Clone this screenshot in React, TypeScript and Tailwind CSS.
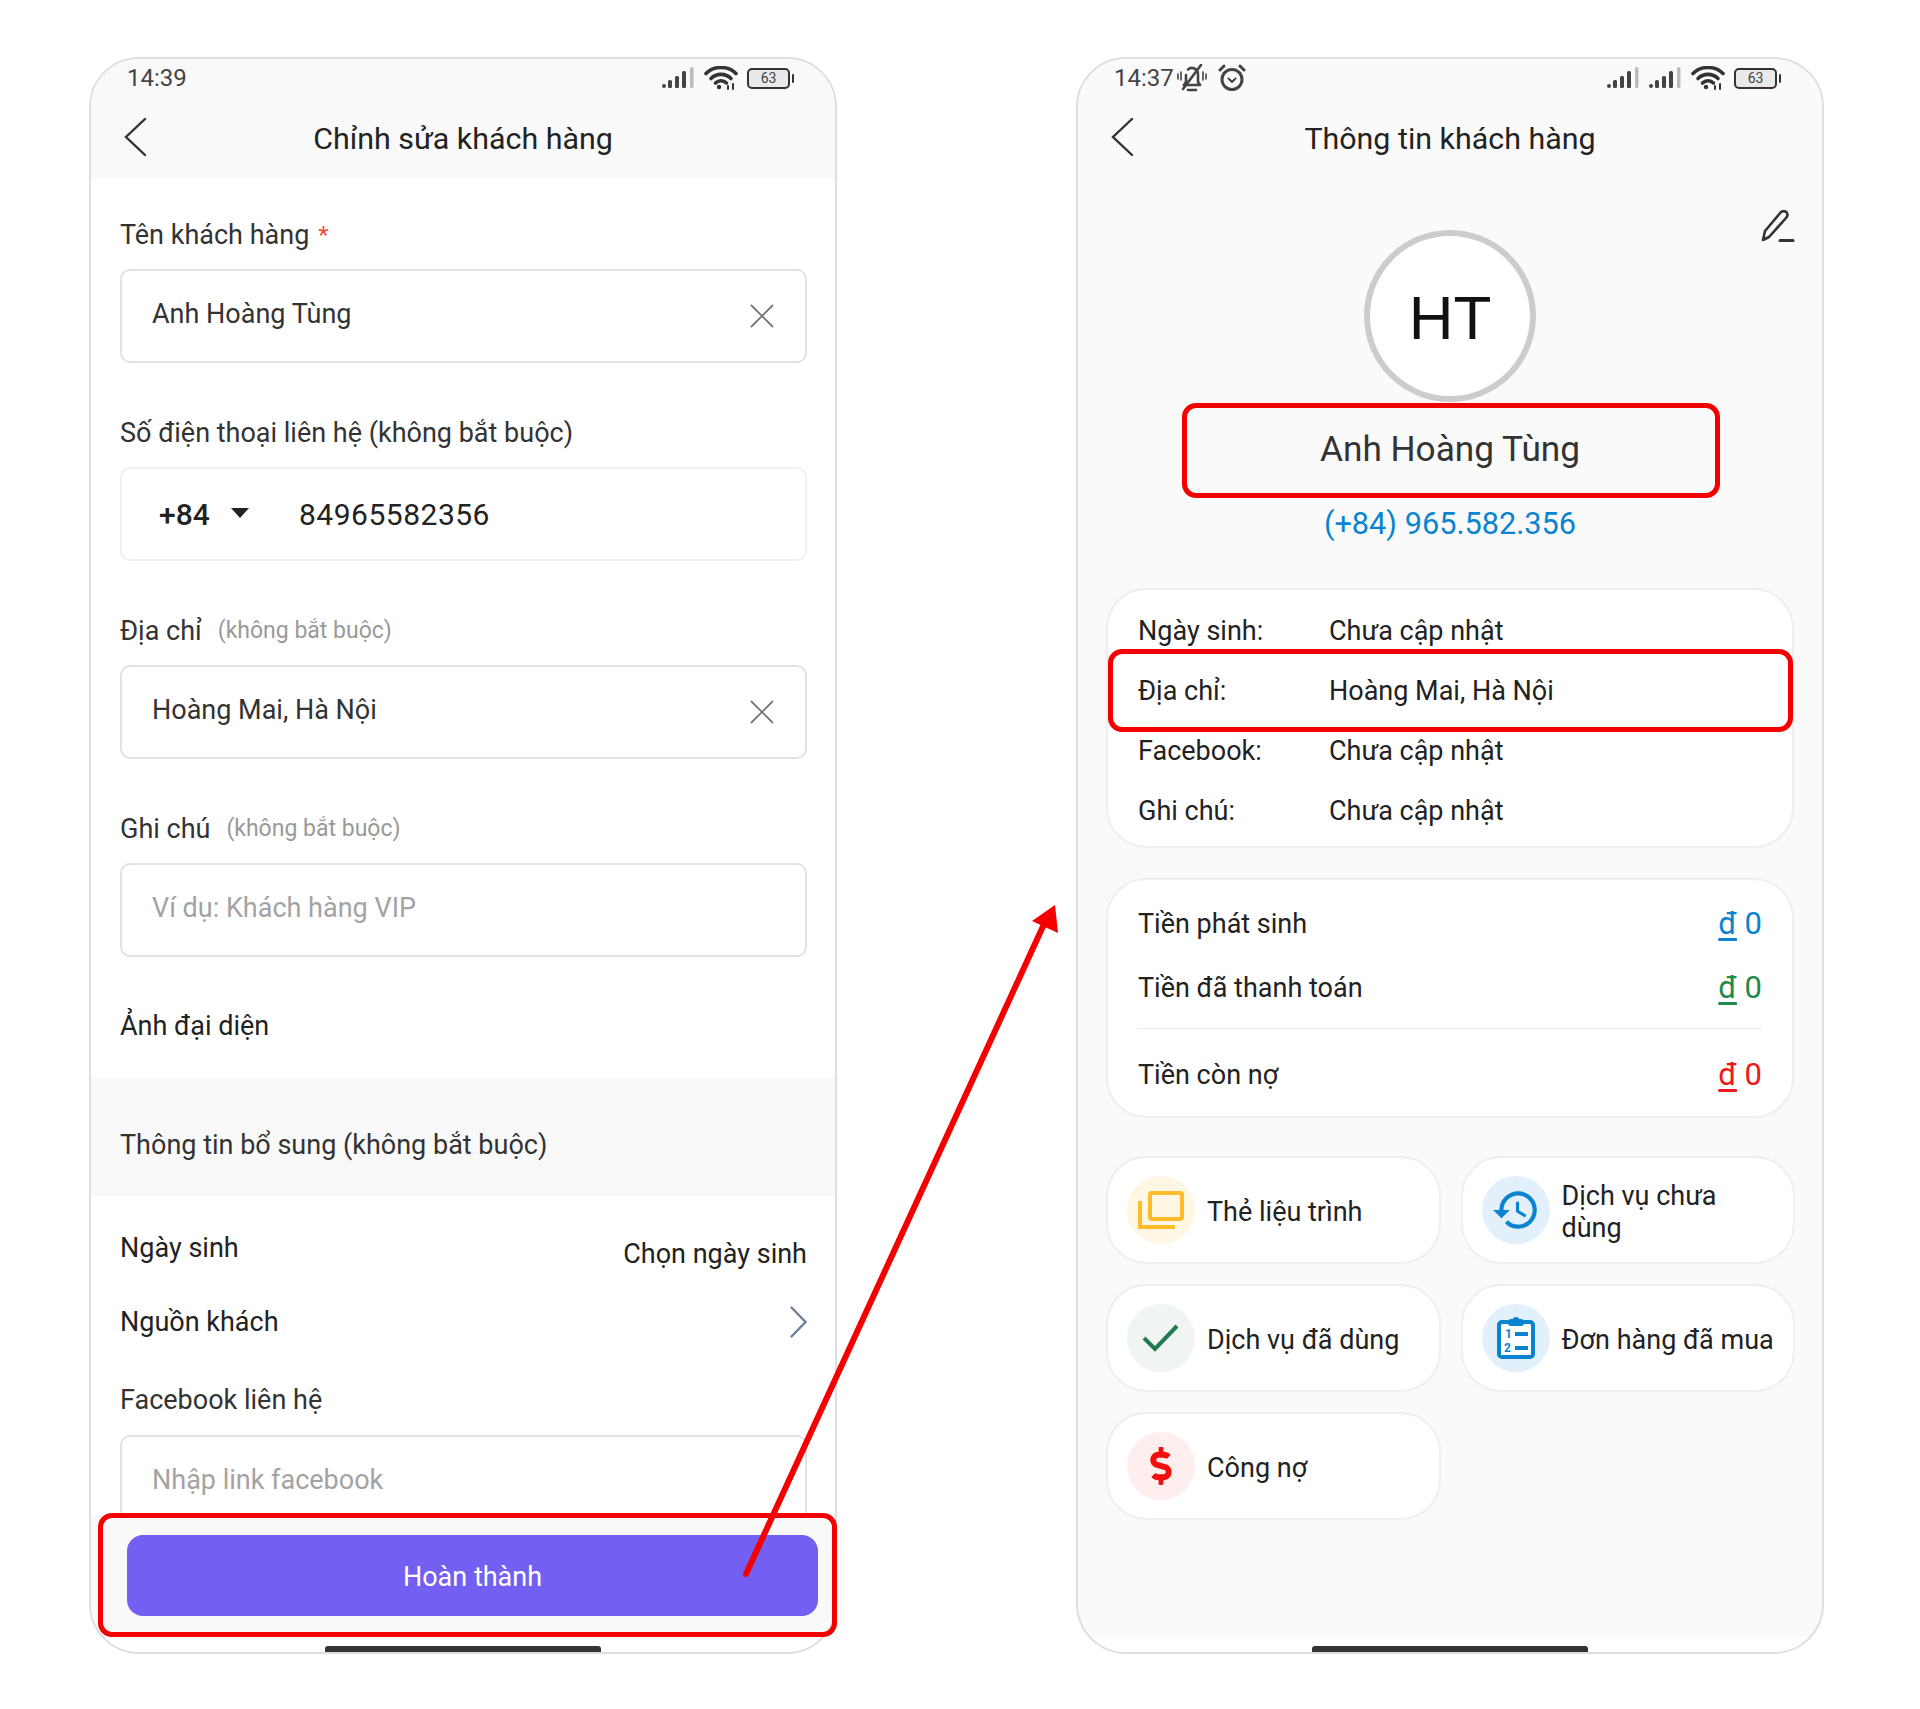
import React from "react";
import { MdHistory } from "react-icons/md";
import { FaDollarSign } from "react-icons/fa";

const Signal = () => (
  <svg width="33" height="22" viewBox="0 0 33 22" fill="#444">
    <rect x="0" y="17" width="4" height="4" rx="2" />
    <rect x="6" y="13" width="4" height="8" rx="1.5" />
    <rect x="13" y="9" width="4" height="12" rx="1.5" />
    <rect x="20" y="4" width="4" height="17" rx="1.5" />
    <rect x="28" y="0" width="3.5" height="21" rx="1.5" fill="#bbb" />
  </svg>
);

const Wifi = () => (
  <svg width="34" height="24" viewBox="0 0 34 24" fill="none" stroke="#333" strokeWidth="3.6" strokeLinecap="round">
    <path d="M2 7.5C10 -0.5 24 -0.5 32 7.5" />
    <path d="M7 12.5C12.5 7 21.5 7 27 12.5" />
    <path d="M11.5 17C14.5 14 19.5 14 22.5 17" />
    <circle cx="15" cy="21" r="2.2" fill="#333" stroke="none" />
    <path d="M24 20v3M29 18v5" strokeWidth="2" />
  </svg>
);

const Battery = () => (
  <div className="flex items-center gap-[2px]">
    <div className="flex h-[21px] w-[43px] items-center justify-center rounded-[5px] border-[2px] border-[#333] bg-[#e9e9e9] text-[14px] leading-none text-[#444]">
      63
    </div>
    <div className="h-[9px] w-[2px] rounded-sm bg-[#333]" />
  </div>
);

const MutedBell = () => (
  <svg width="32" height="28" viewBox="0 0 32 28" fill="none" stroke="#444" strokeWidth="2.6" strokeLinecap="round" strokeLinejoin="round">
    <path d="M8 21h16l-2-3v-8a6 6 0 0 0-10-4.5" />
    <path d="M10 11v7l-2 3" />
    <path d="M12 26h8" />
    <path d="M7 25L25 1" />
    <path d="M2 10v5M5 8v8M27 8v8M30 10v5" strokeWidth="1.6" />
  </svg>
);

const Alarm = () => (
  <svg width="28" height="28" viewBox="0 0 28 28" fill="none" stroke="#444" strokeWidth="3" strokeLinecap="round" strokeLinejoin="round">
    <circle cx="14" cy="15.5" r="10" />
    <path d="M2 6l4-4M26 6l-4-4" />
    <path d="M10.5 14.5l3.5 3.5 3.5-3.5" strokeWidth="2" />
  </svg>
);

const Back = () => (
  <svg width="23" height="38" viewBox="0 0 23 38" fill="none" stroke="#333" strokeWidth="2.4" strokeLinecap="round">
    <path d="M21 1L2 19l19 18" />
  </svg>
);

const Cross = () => (
  <svg width="24" height="24" viewBox="0 0 24 24" fill="none" stroke="#777" strokeWidth="1.8">
    <path d="M1 1l22 22M23 1L1 23" />
  </svg>
);

function Header({ title, children, tint }: { title: string; children: React.ReactNode; tint: string }) {
  return (
    <div className={`h-[120px] shrink-0 ${tint}`}>
      <div className="flex h-[36px] items-center pl-[36px] pr-[41px] pt-[2px]">{children}</div>
      <div className="relative flex h-[84px] items-center justify-center pt-[4px] text-[30.4px] leading-none text-[#222]">
        <div className="absolute left-[33px] top-[23px]">
          <Back />
        </div>
        {title}
      </div>
    </div>
  );
}

function Field({
  label,
  hint,
  required,
  value,
  placeholder,
  clear,
}: {
  label: string;
  hint?: string;
  required?: boolean;
  value?: string;
  placeholder?: string;
  clear?: boolean;
}) {
  return (
    <div>
      <div className="flex h-[36px] items-center pt-[2px] text-[27px] text-[#333]">
        {label}
        {required && <span className="ml-[9px] text-[24px] text-[#e5503c]">*</span>}
        {hint && <span className="ml-[16px] text-[23px] text-[#999]">{hint}</span>}
      </div>
      <div className="mt-[17px] flex h-[94px] items-center justify-between rounded-[10px] border-[2px] border-[#e2e2e2] bg-white pb-[3px] pl-[30px] pr-[31px] text-[27px]">
        <span className={value ? "text-[#333]" : "text-[#a3a3a3]"}>{value ?? placeholder}</span>
        {clear && (
          <span className="mt-[3px]">
            <Cross />
          </span>
        )}
      </div>
    </div>
  );
}

function EditPhone() {
  return (
    <div className="relative flex h-[1597px] w-[748px] shrink-0 flex-col overflow-hidden rounded-[50px] border-[2px] border-[#dedede] bg-white">
      <Header title="Chỉnh sửa khách hàng" tint="bg-[#f9f9f9]">
        <span className="text-[24px] leading-none text-[#444]">14:39</span>
        <div className="ml-auto flex items-center gap-[9px]">
          <Signal />
          <Wifi />
          <Battery />
        </div>
      </Header>

      <div className="flex flex-col gap-[51px] pl-[29px] pr-[28px] pt-[37px]">
        <Field label="Tên khách hàng" required value="Anh Hoàng Tùng" clear />
        <div>
          <div className="flex h-[36px] items-center pt-[2px] text-[27px] text-[#333]">Số điện thoại liên hệ (không bắt buộc)</div>
          <div className="mt-[17px] flex h-[94px] items-center rounded-[10px] border-[2px] border-[#f0f0f0] bg-white pl-[37px] text-[30px] text-[#222]">
            <span className="w-[50px] font-medium">+84</span>
            <span className="ml-[22px] mt-[-2px] h-0 w-0 border-x-[9px] border-t-[10px] border-x-transparent border-t-[#222]" />
            <span className="ml-[50px] tracking-[0.5px]">84965582356</span>
          </div>
        </div>
        <Field label="Địa chỉ" hint="(không bắt buộc)" value="Hoàng Mai, Hà Nội" clear />
        <Field label="Ghi chú" hint="(không bắt buộc)" placeholder="Ví dụ: Khách hàng VIP" />
        <div className="flex h-[36px] items-center text-[27px] text-[#222]">Ảnh đại diện</div>
      </div>

      <div className="mt-[33px] h-[119px] shrink-0 bg-[#f9f9f9] pl-[29px] pr-[28px] pt-[50px] text-[27px] leading-[36px] text-[#333]">
        Thông tin bổ sung (không bắt buộc)
      </div>

      <div className="pl-[29px] pr-[28px] text-[27px] leading-[36px] text-[#222]">
        <div className="mt-[34px] flex justify-between">
          <span>Ngày sinh</span>
          <span className="mt-[6px]">Chọn ngày sinh</span>
        </div>
        <div className="mt-[32px] flex items-center justify-between">
          <span>Nguồn khách</span>
          <svg width="17" height="32" viewBox="0 0 17 32" fill="none" stroke="#6f8199" strokeWidth="2.4" strokeLinecap="round">
            <path d="M1.5 1.5L15.5 16L1.5 30.5" />
          </svg>
        </div>
        <div className="mt-[42px] text-[#333]">Facebook liên hệ</div>
        <div className="mt-[17px] h-[120px] rounded-[10px] border-[2px] border-[#e2e2e2] pl-[30px] pt-[25px] text-[#a3a3a3]">
          Nhập link facebook
        </div>
      </div>

      <div className="absolute inset-x-0 bottom-[16px] h-[120px] bg-[#f9f9f9] pl-[36px] pr-[17px] pt-[19px]">
        <div className="flex h-[81px] items-center justify-center rounded-[16px] bg-[#7360f2] pt-[4px] text-[27px] text-white">
          Hoàn thành
        </div>
      </div>
      <div className="absolute bottom-0 left-[234px] h-[6px] w-[276px] rounded-t-[3px] bg-[#333]" />
    </div>
  );
}

function InfoRow({ label, value }: { label: string; value: string }) {
  return (
    <div className="flex h-[60px] items-center pt-[1px] text-[27px] text-[#222]">
      <span className="w-[191px] shrink-0">{label}</span>
      <span>{value}</span>
    </div>
  );
}

function MoneyRow({ label, color, className }: { label: string; color: string; className: string }) {
  return (
    <div className={`flex h-[40px] items-center justify-between text-[27px] text-[#222] ${className}`}>
      <span className="pt-[2px]">{label}</span>
      <span className={`pt-[2px] text-[31px] ${color}`}>
        <span className="underline underline-offset-[4px]">đ</span> 0
      </span>
    </div>
  );
}

function Tile({ icon, tint, children }: { icon: React.ReactNode; tint: string; children: React.ReactNode }) {
  return (
    <div className="flex h-[108px] items-center rounded-[40px] border-[2px] border-[#efefef] bg-white pl-[19px] pr-[8px]">
      <div className={`flex h-[68px] w-[68px] shrink-0 items-center justify-center rounded-full ${tint}`}>{icon}</div>
      <div className="ml-[12px] pt-[4px] text-[27px] leading-[32px] text-[#222]">{children}</div>
    </div>
  );
}

function InfoPhone() {
  return (
    <div className="relative flex h-[1597px] w-[748px] shrink-0 flex-col overflow-hidden rounded-[50px] border-[2px] border-[#dedede] bg-[#fafafa]">
      <Header title="Thông tin khách hàng" tint="bg-[#fafafa]">
        <span className="text-[24px] leading-none text-[#444]">14:37</span>
        <span className="ml-[2px]">
          <MutedBell />
        </span>
        <span className="ml-[10px]">
          <Alarm />
        </span>
        <div className="ml-auto flex items-center gap-[9px]">
          <Signal />
          <Signal />
          <Wifi />
          <Battery />
        </div>
      </Header>

      <svg className="absolute left-[683px] top-[151px]" width="34" height="32" viewBox="0 0 34 32" fill="none" stroke="#333" strokeWidth="2.6" strokeLinecap="round" strokeLinejoin="round">
        <path d="M2 30l2-9L20 2c2-1.5 5-1 6 1s0 4-1 5L8 27z" />
        <path d="M19 30.5h13" strokeWidth="3" />
      </svg>

      <div className="flex flex-col items-center">
        <div className="mt-[51px] flex h-[172px] w-[172px] items-center justify-center rounded-full border-[6px] border-[#cccccc] bg-white pt-[4px] text-[62px] leading-none text-[#111] [font-family:'Liberation_Sans',sans-serif]">
          HT
        </div>
        <div className="mt-[25px] flex h-[44px] items-center pt-[1px] text-[35.2px] text-[#333]">Anh Hoàng Tùng</div>
        <div className="mt-[33px] flex h-[40px] items-center pt-[1px] text-[30.7px] text-[#0a84d0]">(+84) 965.582.356</div>
      </div>

      <div className="mx-[28px] mt-[44px] h-[260px] rounded-[40px] border-[2px] border-[#efefef] bg-white px-[30px] pt-[11px]">
        <InfoRow label="Ngày sinh:" value="Chưa cập nhật" />
        <InfoRow label="Địa chỉ:" value="Hoàng Mai, Hà Nội" />
        <InfoRow label="Facebook:" value="Chưa cập nhật" />
        <InfoRow label="Ghi chú:" value="Chưa cập nhật" />
      </div>

      <div className="mx-[28px] mt-[30px] h-[240px] rounded-[40px] border-[2px] border-[#efefef] bg-white px-[30px] pt-[23px]">
        <MoneyRow label="Tiền phát sinh" color="text-[#0a84d0]" className="" />
        <MoneyRow label="Tiền đã thanh toán" color="text-[#1f8a4d]" className="mt-[24px]" />
        <div className="mt-[21px] h-[1px] bg-[#ececec]" />
        <MoneyRow label="Tiền còn nợ" color="text-[#f01818]" className="mt-[25px]" />
      </div>

      <div className="ml-[28px] mr-[27px] mt-[38px] grid grid-cols-2 gap-x-[20px] gap-y-[20px]">
        <Tile
          tint="bg-[#fff6e3]"
          icon={
            <svg width="46" height="38" viewBox="0 0 46 38" fill="none" stroke="#fcbc2c" strokeWidth="4">
              <rect x="12" y="2" width="32" height="26" rx="2" />
              <path d="M2 10v26h35" />
            </svg>
          }
        >
          Thẻ liệu trình
        </Tile>
        <Tile tint="bg-[#e1f0fa]" icon={<MdHistory size={50} color="#0a84d0" />}>
          Dịch vụ chưa
          <br />
          dùng
        </Tile>
        <Tile
          tint="bg-[#f0f5f2]"
          icon={
            <svg width="38" height="28" viewBox="0 0 38 28" fill="none" stroke="#1f7a4d" strokeWidth="4">
              <path d="M2 14l11 11L35 2" />
            </svg>
          }
        >
          Dịch vụ đã dùng
        </Tile>
        <Tile
          tint="bg-[#e1f0fa]"
          icon={
            <svg width="38" height="42" viewBox="0 0 38 42" fill="none">
              <rect x="2" y="5" width="34" height="35" rx="3" fill="white" stroke="#0a84d0" strokeWidth="4" />
              <rect x="11" y="2" width="16" height="7" rx="3" fill="#0a84d0" />
              <circle cx="19" cy="3.5" r="3.5" fill="#0a84d0" />
              <text x="8" y="21" fontSize="12" fontWeight="700" fill="#0a84d0" fontFamily="Roboto, sans-serif">1</text>
              <text x="7" y="35" fontSize="12" fontWeight="700" fill="#0a84d0" fontFamily="Roboto, sans-serif">2</text>
              <rect x="18" y="15" width="13" height="4" fill="#0a84d0" />
              <rect x="18" y="29" width="13" height="4" fill="#0a84d0" />
            </svg>
          }
        >
          Đơn hàng đã mua
        </Tile>
        <Tile tint="bg-[#ffeeee]" icon={<FaDollarSign size={38} color="#f40d0d" />}>
          Công nợ
        </Tile>
      </div>

      <div className="absolute inset-x-0 bottom-0 h-[15px] bg-white" />
      <div className="absolute bottom-0 left-[234px] h-[6px] w-[276px] rounded-t-[3px] bg-[#333]" />
    </div>
  );
}

export default function App() {
  return (
    <div className="relative h-[1709px] w-[1920px] overflow-hidden bg-white [font-family:Roboto,'Liberation_Sans',sans-serif]">
      <div className="flex gap-[239px] pl-[89px] pt-[57px]">
        <EditPhone />
        <InfoPhone />
      </div>

      {/* annotation overlays */}
      <div className="absolute left-[98px] top-[1513px] h-[124px] w-[739px] rounded-[14px] border-[5px] border-[#f40000]" />
      <div className="absolute left-[1182px] top-[403px] h-[95px] w-[538px] rounded-[14px] border-[5px] border-[#f40000]" />
      <div className="absolute left-[1108px] top-[649px] h-[83px] w-[685px] rounded-[14px] border-[5px] border-[#f40000]" />
      <svg className="absolute left-0 top-0" width="1920" height="1709" fill="none">
        <path d="M746 1574L1045 922" stroke="#f40000" strokeWidth="6" strokeLinecap="round" />
        <path d="M1055 905L1032 921L1058 933Z" fill="#f40000" />
      </svg>
    </div>
  );
}
